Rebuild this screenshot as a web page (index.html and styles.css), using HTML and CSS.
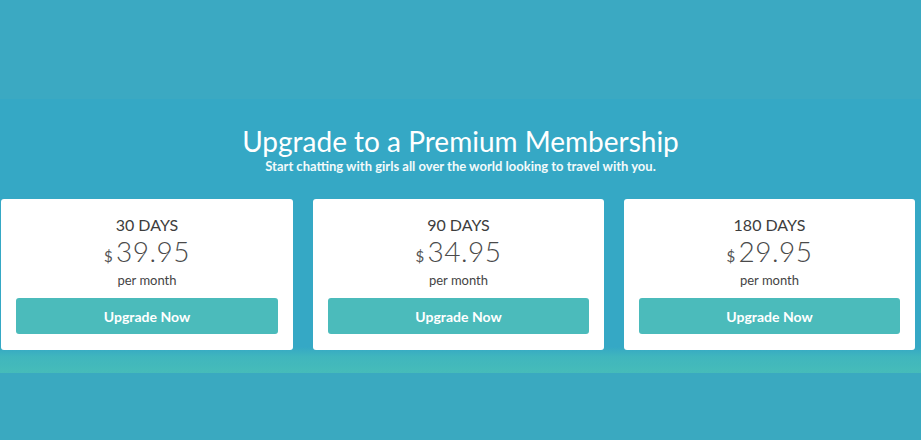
FILE: index.html
```html
<!DOCTYPE html>
<html>
<head>
<meta charset="utf-8">
<link rel="stylesheet" href="styles.css">
</head>
<body>
<div class="top"></div>
<section class="pricing">
  <h1 class="title">Upgrade to a Premium Membership</h1>
  <p class="subtitle">Start chatting with girls all over the world looking to travel with you.</p>
  <div class="cards">
    <div class="card">
      <div class="days">30 DAYS</div>
      <div class="price"><span class="cur">$</span>39.95</div>
      <div class="per">per month</div>
      <a class="btn">Upgrade Now</a>
    </div>
    <div class="card">
      <div class="days">90 DAYS</div>
      <div class="price"><span class="cur">$</span>34.95</div>
      <div class="per">per month</div>
      <a class="btn">Upgrade Now</a>
    </div>
    <div class="card">
      <div class="days">180 DAYS</div>
      <div class="price"><span class="cur">$</span>29.95</div>
      <div class="per">per month</div>
      <a class="btn">Upgrade Now</a>
    </div>
  </div>
</section>
<div class="bottom"></div>
</body>
</html>
```
FILE: styles.css
```css
html, body {
  margin: 0;
  padding: 0;
}
body {
  width: 921px;
  height: 440px;
  overflow: hidden;
  background: #3aa9c0;
  font-family: Lato, "Open Sans", sans-serif;
}
.top {
  height: 99px;
  background: #3ba9c2;
}
.pricing {
  height: 274px;
  box-sizing: border-box;
  padding-top: 25px;
  background: linear-gradient(to bottom, #35a8c5 0px, #35a8c5 248px, #40b6bd 258px, #46bcb9 274px);
}
.title {
  margin: 0;
  text-align: center;
  font-weight: 400;
  font-size: 28px;
  line-height: 34px;
  color: #ffffff;
}
.subtitle {
  margin: 0;
  text-align: center;
  font-weight: 700;
  font-size: 13px;
  line-height: 16px;
  color: #f2fafb;
}
.cards {
  display: grid;
  grid-template-columns: 292px 291px 291px;
  column-gap: 20px;
  padding-left: 1px;
  margin-top: 25px;
}
.card {
  background: #ffffff;
  border-radius: 3px;
  height: 151px;
  box-sizing: border-box;
  padding: 16px 15px 0;
  display: flex;
  flex-direction: column;
  align-items: center;
  color: #444;
}
.days {
  font-size: 16px;
  line-height: 20px;
  color: #3d3d3d;
}
.price {
  font-weight: 300;
  font-size: 28px;
  line-height: 32px;
  color: #4a4a4a;
  letter-spacing: 0.5px;
}
.cur {
  font-size: 15px;
  line-height: 1;
  font-weight: 400;
  margin-right: 3px;
  color: #555;
}
.per {
  margin-top: 3px;
  font-size: 13px;
  line-height: 20px;
  color: #444;
}
.btn {
  align-self: stretch;
  margin-top: 8px;
  height: 36px;
  border-radius: 3px;
  background: #4bbbbb;
  color: #ffffff;
  font-weight: 700;
  font-size: 14px;
  display: flex;
  align-items: center;
  justify-content: center;
}
.bottom {
  height: 67px;
}
```
